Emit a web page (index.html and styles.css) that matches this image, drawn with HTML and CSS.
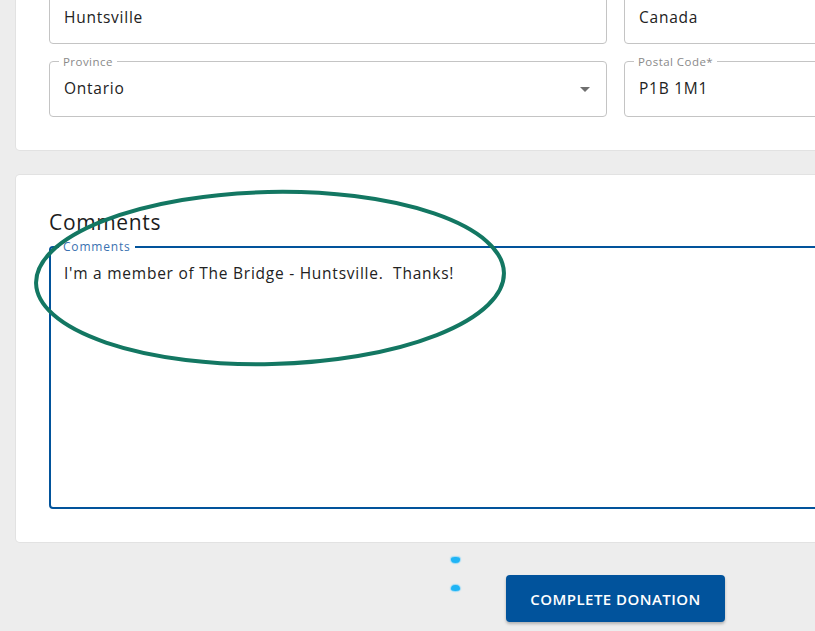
FILE: index.html
```html
<!DOCTYPE html>
<html lang="en">
<head>
<meta charset="utf-8">
<title>Donation form</title>
<link rel="stylesheet" href="styles.css">
</head>
<body>
<div class="page">
  <section class="card card-address">
    <div class="grid">
      <fieldset class="field">
        <legend class="notch-empty"></legend>
        <div class="value">Huntsville</div>
      </fieldset>
      <fieldset class="field">
        <legend class="notch-empty"></legend>
        <div class="value">Canada</div>
      </fieldset>
      <fieldset class="field select">
        <legend class="label">Province</legend>
        <div class="value">Ontario</div>
        <span class="arrow"></span>
      </fieldset>
      <fieldset class="field">
        <legend class="label">Postal Code*</legend>
        <div class="value">P1B 1M1</div>
      </fieldset>
    </div>
  </section>

  <section class="card card-comments">
    <h2 class="heading">Comments</h2>
    <fieldset class="field focused">
      <legend class="label">Comments</legend>
      <div class="value multiline">I'm a member of The Bridge - Huntsville.&nbsp; Thanks!</div>
    </fieldset>
  </section>

  <div class="actions">
    <div class="btn-wrap">
      <span class="spinner"><i class="dot"></i><i class="dot"></i></span>
      <button class="btn">COMPLETE DONATION</button>
    </div>
  </div>
</div>
<svg class="annotation" width="815" height="631" viewBox="0 0 815 631">
  <ellipse cx="270" cy="278" rx="234" ry="86" transform="rotate(-1.3 270 278)" fill="none" stroke="#137762" stroke-width="4"/>
</svg>
</body>
</html>
```

FILE: styles.css
```css
html, body {
  margin: 0;
  padding: 0;
}
body {
  background: #ededed;
  font-family: "Open Sans", "Liberation Sans", sans-serif;
  color: #222;
  width: 815px;
  height: 631px;
  overflow: hidden;
  position: relative;
}
.page {
  width: 1199px;
  margin-left: 16px;
  margin-top: -12px;
}
.card {
  background: #fff;
  border-radius: 4px;
  box-shadow: 0 0 0 1px #e2e2e2;
  padding: 33px;
}
.card-address {
  padding-top: 0;
}
.card-comments {
  margin-top: 25px;
  padding-top: 33px;
}
.grid {
  display: grid;
  grid-template-columns: 558px 558px;
  column-gap: 17px;
  row-gap: 17px;
}
.field {
  margin: 0;
  border: 1px solid #c4c4c4;
  border-radius: 4px;
  height: 56px;
  box-sizing: border-box;
  padding: 0 14px;
  position: relative;
  min-width: 0;
}
.field legend {
  font-size: 11.5px;
  line-height: 0;
  height: 0;
  padding: 0 4px;
  margin-left: -5px;
  color: #8a8a8a;
  letter-spacing: 0.45px;
}
.field legend.notch-empty {
  padding: 0;
}
.value {
  font-size: 15.5px;
  line-height: 20px;
  color: #222;
  letter-spacing: 0.75px;
  padding-top: 15.5px;
}
.notch-empty + .value {
  padding-top: 18px;
}
.select .arrow {
  position: absolute;
  right: 16px;
  top: 25px;
  width: 0;
  height: 0;
  border-left: 5px solid transparent;
  border-right: 5px solid transparent;
  border-top: 5px solid #6f6f6f;
}
.heading {
  margin: 0 0 10px;
  font-size: 21px;
  line-height: 28px;
  font-weight: 500;
  color: #1c1c1c;
  letter-spacing: 0.65px;
}
.field.focused {
  border: 2px solid #02539b;
  height: 263px;
  padding: 0 13px;
}
.field.focused legend {
  color: #3a72b1;
  font-size: 12px;
  letter-spacing: 0.8px;
}
.multiline {
  padding-top: 14.5px;
}
.actions {
  margin-top: 33px;
  display: flex;
  justify-content: center;
}
.btn-wrap {
  position: relative;
}
.btn {
  width: 219px;
  height: 47px;
  border: none;
  border-radius: 4px;
  background: #01539c;
  color: #fff;
  font-family: "Open Sans", "Liberation Sans", sans-serif;
  font-size: 15px;
  font-weight: 600;
  letter-spacing: 0.45px;
  box-shadow: 0 2px 3px rgba(0,0,0,0.25);
  cursor: pointer;
}
.spinner {
  position: absolute;
  left: -55px;
  top: -20px;
  width: 10px;
  height: 40px;
}
.dot {
  position: absolute;
  left: 0;
  width: 9px;
  height: 6px;
  border-radius: 50%;
  background: #1fb4f5;
  box-shadow: 0 0 1px 1px rgba(120,210,250,0.7);
}
.dot:first-child {
  top: 2px;
  border-radius: 50% 50% 60% 60% / 40% 40% 70% 70%;
}
.dot:last-child {
  top: 30px;
  border-radius: 50% 50% 50% 50% / 70% 70% 40% 40%;
}
.annotation {
  position: absolute;
  left: 0;
  top: 0;
  pointer-events: none;
}
```
